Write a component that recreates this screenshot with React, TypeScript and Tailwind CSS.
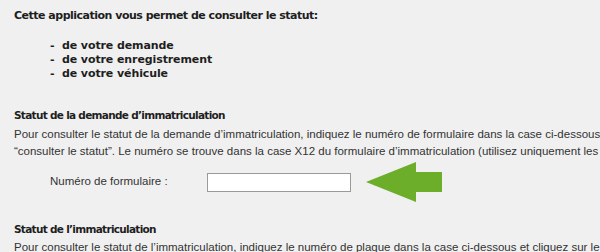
const boldFont = "font-['DejaVu_Sans',Verdana,sans-serif] font-bold leading-[14px] whitespace-nowrap";
const sectionTitle = `${boldFont} text-[10.5px] tracking-[-0.7px]`;
const bodyText = "font-['Liberation_Sans',Arial,sans-serif] text-[11.5px] leading-[17px] text-[#333] whitespace-nowrap";

const items = ['de votre demande', 'de votre enregistrement', 'de votre véhicule'];

export default function App() {
  return (
    <div className="w-[600px] h-[252px] overflow-hidden bg-[#f0f0f0] pl-[14px] text-[#1e1e1e]">
      <div className={`pt-[9px] text-[11px] tracking-[-0.5px] ${boldFont}`}>
        Cette application vous permet de consulter le statut:
      </div>

      <ul className={`mt-[16px] pl-[36px] text-[11px] tracking-[-0.1px] ${boldFont}`}>
        {items.map((item) => (
          <li key={item} className="flex">
            <span className="w-[12px]">-</span>
            <span>{item}</span>
          </li>
        ))}
      </ul>

      <div className={`mt-[27px] ${sectionTitle}`}>Statut de la demande d’immatriculation</div>
      <div className={`mt-[4px] ${bodyText}`}>
        <div>
          Pour consulter le statut de la demande d’immatriculation, indiquez le numéro de formulaire dans la case ci-dessous et cliquez sur le bouton
        </div>
        <div>
          “consulter le statut”. Le numéro se trouve dans la case X12 du formulaire d’immatriculation (utilisez uniquement les chiffres).
        </div>
      </div>

      <div className="mt-[2px] flex items-center pl-[36px]">
        <label className="w-[157px] font-['Liberation_Sans',Arial,sans-serif] text-[11.5px] text-[#333]">
          Numéro de formulaire :
        </label>
        <input
          type="text"
          className="h-[19px] w-[144px] border border-[#9a9a9a] bg-white outline-none"
        />
        <svg width="76" height="40" viewBox="0 0 76 40" className="ml-[15px]">
          <polygon points="0,20 50,0 50,10 76,10 76,30 50,30 50,40" fill="#6cad2a" />
        </svg>
      </div>

      <div className={`mt-[20px] ${sectionTitle}`}>Statut de l’immatriculation</div>
      <div className={`mt-[3px] ${bodyText}`}>
        Pour consulter le statut de l’immatriculation, indiquez le numéro de plaque dans la case ci-dessous et cliquez sur le bouton
      </div>
    </div>
  );
}
